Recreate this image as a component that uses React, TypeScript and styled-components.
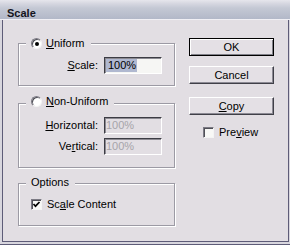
import React from 'react';
import styled, { createGlobalStyle } from 'styled-components';

const FACE = '#e2dee3';
const FRAME = '#5e5c78';

const GlobalStyle = createGlobalStyle`
  html, body {
    margin: 0;
    background: ${FACE};
  }
  body {
    font-family: "Liberation Sans", Arial, sans-serif;
    font-size: 11px;
    color: #000;
  }
  u {
    text-decoration-thickness: 1px;
    text-underline-offset: 1px;
  }
`;

const App: React.FC = () => {
  return (
    <>
      <GlobalStyle />
      <Window>
        <TitleBar>Scale</TitleBar>
        <Frame>
          <LeftColumn>
            <Group $height={43} $top={0}>
              <Legend $lift={7}>
                <Radio $checked />
                <span>
                  <u>U</u>niform
                </span>
              </Legend>
              <FieldRow $top={7}>
                <Label>
                  <u>S</u>cale:
                </Label>
                <TextBox>
                  <Selected>100%</Selected>
                </TextBox>
              </FieldRow>
            </Group>

            <Group $height={65} $top={17}>
              <Legend $lift={9}>
                <Radio $checked={false} />
                <span>
                  <u>N</u>on-Uniform
                </span>
              </Legend>
              <FieldRow $top={9}>
                <Label>
                  <u>H</u>orizontal:
                </Label>
                <TextBox $disabled>100%</TextBox>
              </FieldRow>
              <FieldRow $top={4}>
                <Label>
                  Ve<u>r</u>tical:
                </Label>
                <TextBox $disabled>100%</TextBox>
              </FieldRow>
            </Group>

            <Group $height={43} $top={15}>
              <Legend $lift={8}>Options</Legend>
              <CheckRow $top={9} $indent={12}>
                <CheckBox>
                  <CheckMark />
                </CheckBox>
                <span>
                  Sc<u>a</u>le Content
                </span>
              </CheckRow>
            </Group>
          </LeftColumn>

          <RightColumn>
            <Button $default $top={0}>OK</Button>
            <Button $top={10}>Cancel</Button>
            <Button $top={13}>
              <u>C</u>opy
            </Button>
            <CheckRow $top={11} $indent={14}>
              <CheckBox />
              <span>
                Pre<u>v</u>iew
              </span>
            </CheckRow>
          </RightColumn>
        </Frame>
      </Window>
    </>
  );
};

const CheckMark = () => (
  <svg width="9" height="9" viewBox="0 0 9 9">
    <polyline points="1.5,4 3.5,6.2 7.5,2" fill="none" stroke="#000" strokeWidth="1.7" />
  </svg>
);

const Window = styled.div`
  width: 290px;
  height: 245px;
  box-sizing: border-box;
  display: flex;
  flex-direction: column;
  background: #d8d6de;
  border-bottom: 1px solid ${FRAME};
`;

const TitleBar = styled.div`
  flex: none;
  height: 20px;
  box-sizing: border-box;
  padding: 7px 0 0 7px;
  border-bottom: 1px solid #f0eff4;
  background: linear-gradient(to bottom, #e6e6ec 0px, #d8d9e2 3px, #c4c8d4 8px, #b2b8c8 19px);
  font-weight: bold;
  line-height: 12px;
  color: #141420;
`;

const Frame = styled.div`
  flex: 1;
  display: flex;
  gap: 14px;
  margin: 0 1px 2px 2px;
  padding: 18px 14px 0 15px;
  background: ${FACE};
  border: 1px solid ${FRAME};
  border-top: none;
`;

const LeftColumn = styled.div`
  width: 157px;
  padding-top: 5px;
  display: flex;
  flex-direction: column;
`;

const RightColumn = styled.div`
  width: 85px;
  display: flex;
  flex-direction: column;
`;

const Group = styled.div<{ $height: number; $top: number }>`
  box-sizing: border-box;
  height: ${p => p.$height}px;
  margin-top: ${p => p.$top}px;
  border: 1px solid #9c9aa4;
  box-shadow: inset 1px 1px 0 #fff, 1px 1px 0 #fff;
  display: flex;
  flex-direction: column;
`;

const Legend = styled.div<{ $lift: number }>`
  align-self: flex-start;
  display: flex;
  align-items: center;
  gap: 4px;
  height: 13px;
  line-height: 13px;
  margin: -${p => p.$lift}px 0 0 7px;
  padding: 0 6px 0 5px;
  background: ${FACE};
`;

const Radio = styled.span<{ $checked: boolean }>`
  display: grid;
  place-items: center;
  width: 11px;
  height: 11px;
  box-sizing: border-box;
  border-radius: 50%;
  background: #fff;
  border: 1px solid;
  border-color: #7c7a84 #f4f4f4 #f4f4f4 #7c7a84;
  box-shadow: inset 1px 1px 0 #505058;

  &::after {
    content: '';
    width: 4px;
    height: 4px;
    border-radius: 50%;
    background: #000;
    display: ${p => (p.$checked ? 'block' : 'none')};
  }
`;

const FieldRow = styled.div<{ $top: number }>`
  display: grid;
  grid-template-columns: 79px 58px;
  column-gap: 6px;
  align-items: center;
  margin-top: ${p => p.$top}px;
`;

const Label = styled.span`
  text-align: right;
  line-height: 13px;
`;

const TextBox = styled.div<{ $disabled?: boolean }>`
  height: 17px;
  box-sizing: border-box;
  display: flex;
  align-items: center;
  padding-left: 1px;
  border: 1px solid;
  border-color: #3c3c44 #fff #fff #3c3c44;
  box-shadow: inset 1px 1px 0 #8c8a92;
  background: ${p => (p.$disabled ? FACE : '#f6f6f4')};
  color: ${p => (p.$disabled ? '#a6a4aa' : '#000')};
  line-height: 13px;
`;

const Selected = styled.span`
  background: #b0b8d0;
  padding: 0 1px 0 2px;
`;

const CheckRow = styled.div<{ $top: number; $indent: number }>`
  display: flex;
  align-items: center;
  gap: 5px;
  height: 13px;
  line-height: 13px;
  margin-top: ${p => p.$top}px;
  padding-left: ${p => p.$indent}px;
`;

const CheckBox = styled.span`
  display: grid;
  place-items: center;
  width: 11px;
  height: 11px;
  box-sizing: border-box;
  background: #f8f8f6;
  border: 1px solid;
  border-color: #7c7a84 #f4f4f4 #f4f4f4 #7c7a84;
  box-shadow: inset 1px 1px 0 #505058;
`;

const Button = styled.div<{ $default?: boolean; $top: number }>`
  height: 18px;
  box-sizing: border-box;
  margin-top: ${p => p.$top}px;
  display: flex;
  align-items: center;
  justify-content: center;
  background: #e4e0e5;
  border: 1px solid;
  border-color: ${p => (p.$default ? '#000' : '#fff #404048 #404048 #fff')};
  box-shadow: ${p =>
    p.$default
      ? 'inset 1px 1px 0 #fff, inset -1px -1px 0 #808088'
      : 'inset -1px -1px 0 #8c8a94'};
  line-height: 13px;
`;

export default App;
